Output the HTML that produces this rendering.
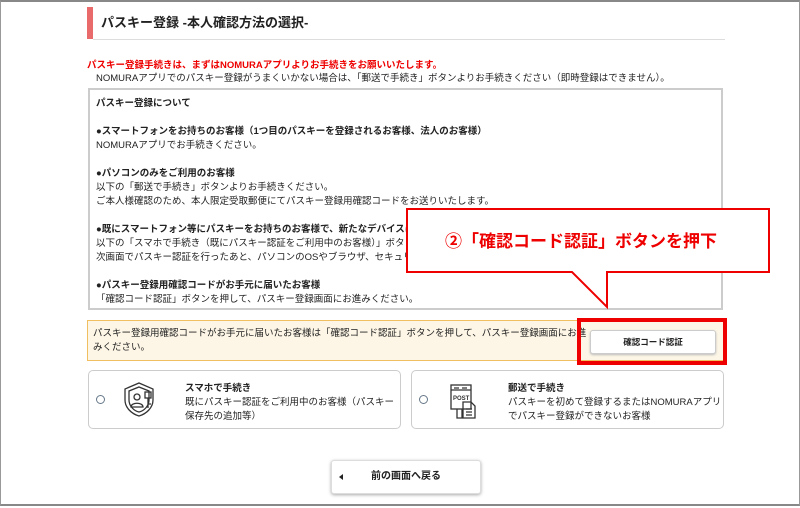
<!DOCTYPE html>
<html><head><meta charset="utf-8"><style>
*{margin:0;padding:0;box-sizing:border-box}
body{width:800px;height:506px;background:#fff;position:relative;overflow:hidden;font-family:"Liberation Sans","Noto Sans CJK JP",sans-serif;color:#222;border:1px solid #999;border-top:2px solid #888;border-bottom:2px solid #888}
.a{position:absolute;white-space:nowrap}
.t{font-size:9.5px;line-height:14px}
.b{font-weight:bold}
</style></head><body>
<div class="a" style="left:86px;top:5px;width:6px;height:32px;background:#e86a6a"></div>
<div class="a" style="left:92px;top:37px;width:632px;height:1px;background:#ddd"></div>
<div class="a b" style="left:100px;top:12px;font-size:13px;line-height:18px">パスキー登録 -本人確認方法の選択-</div>
<div class="a t b" style="left:86px;top:57px;color:#e00;font-size:9.5px">パスキー登録手続きは、まずはNOMURAアプリよりお手続きをお願いいたします。</div>
<div class="a t" style="left:95px;top:70px">NOMURAアプリでのパスキー登録がうまくいかない場合は、「郵送で手続き」ボタンよりお手続きください（即時登録はできません）。</div>
<div class="a" style="left:87px;top:86px;width:635px;height:222px;border:2px solid #ccc"></div>
<div class="a t" style="left:95px;top:95px">
<div class="b">パスキー登録について</div><br>
<div class="b">●スマートフォンをお持ちのお客様（1つ目のパスキーを登録されるお客様、法人のお客様）</div>
<div>NOMURAアプリでお手続きください。</div><br>
<div class="b">●パソコンのみをご利用のお客様</div>
<div>以下の「郵送で手続き」ボタンよりお手続きください。</div>
<div>ご本人様確認のため、本人限定受取郵便にてパスキー登録用確認コードをお送りいたします。</div><br>
<div class="b">●既にスマートフォン等にパスキーをお持ちのお客様で、新たなデバイスにパスキーを登録されるお客様</div>
<div>以下の「スマホで手続き（既にパスキー認証をご利用中のお客様）」ボタンよりお手続きください。</div>
<div>次画面でパスキー認証を行ったあと、パソコンのOSやブラウザ、セキュリティキーなどにパスキーを登録できます。</div><br>
<div class="b">●パスキー登録用確認コードがお手元に届いたお客様</div>
<div>「確認コード認証」ボタンを押して、パスキー登録画面にお進みください。</div>
</div>
<div class="a" style="left:86px;top:318px;width:637px;height:41px;background:#fdf6e6;border:1px solid #f0c060"></div>
<div class="a t" style="left:92px;top:325px">パスキー登録用確認コードがお手元に届いたお客様は「確認コード認証」ボタンを押して、パスキー登録画面にお進<br>みください。</div>
<div class="a" style="left:576px;top:316px;width:150px;height:47px;border:4px solid #e00"></div>
<div class="a b" style="left:589px;top:328px;width:126px;height:24px;background:#fff;border:1px solid #ccc;border-radius:3px;box-shadow:0 1px 2px #bbb;font-size:8.5px;line-height:22px;text-align:center">確認コード認証</div>
<svg class="a" style="left:0;top:0" width="800" height="506"><path d="M406 207H768V270H606V305L571 270H406Z" fill="#fff" stroke="#e00" stroke-width="2"/></svg>
<div class="a b" style="left:444px;top:229px;color:#e00;font-size:17px;line-height:22px">②「確認コード認証」ボタンを押下</div>
<div class="a" style="left:87px;top:368px;width:313px;height:59px;border:1px solid #ccc;border-radius:5px"></div>
<div class="a" style="left:410px;top:368px;width:313px;height:59px;border:1px solid #ccc;border-radius:5px"></div>
<div class="a" style="left:95px;top:393px;width:9px;height:9px;border:1px solid #678;border-radius:50%"></div>
<div class="a" style="left:418px;top:393px;width:9px;height:9px;border:1px solid #678;border-radius:50%"></div>
<svg class="a" style="left:118px;top:378px" width="42" height="40" fill="none" stroke="#333" stroke-width="1.3"><path d="M20 3L34 9V20C34 28 27 34 20 36C13 34 6 28 6 20V9Z"/><path d="M20 7L30 11V20C30 26 25 31 20 32C15 31 10 26 10 20V11Z"/><circle cx="18" cy="17" r="3"/><path d="M12 27C12 22 24 22 24 27Z"/><rect x="26" y="12" width="6" height="6"/><path d="M29 18V28M29 24H32"/></svg>
<svg class="a" style="left:447px;top:381px" width="36" height="38" fill="none" stroke="#333" stroke-width="1.3"><rect x="3" y="2" width="20" height="24"/><path d="M3 7H23M6 5H11M14 5H19"/><text x="5" y="17" font-size="6" fill="#333" stroke="none" font-family="Liberation Sans" font-weight="bold">POST</text><path d="M9 26V35H14V26"/><path d="M15 19H23L27 23V35H15Z"/><path d="M18 26H24M18 29H24M18 32H24"/></svg>
<div class="a t" style="left:184px;top:380px"><b>スマホで手続き</b><br>既にパスキー認証をご利用中のお客様（パスキー<br>保存先の追加等）</div>
<div class="a t" style="left:507px;top:380px"><b>郵送で手続き</b><br>パスキーを初めて登録するまたはNOMURAアプリ<br>でパスキー登録ができないお客様</div>
<div class="a b" style="left:330px;top:458px;width:150px;height:34px;background:#fff;border:1px solid #ddd;border-radius:3px;box-shadow:0 1px 3px #aaa;font-size:10px;line-height:32px;text-align:center">前の画面へ戻る</div>
<div class="a" style="left:338px;top:472px;width:0;height:0;border-top:3px solid transparent;border-bottom:3px solid transparent;border-right:4px solid #222"></div>
</body></html>
